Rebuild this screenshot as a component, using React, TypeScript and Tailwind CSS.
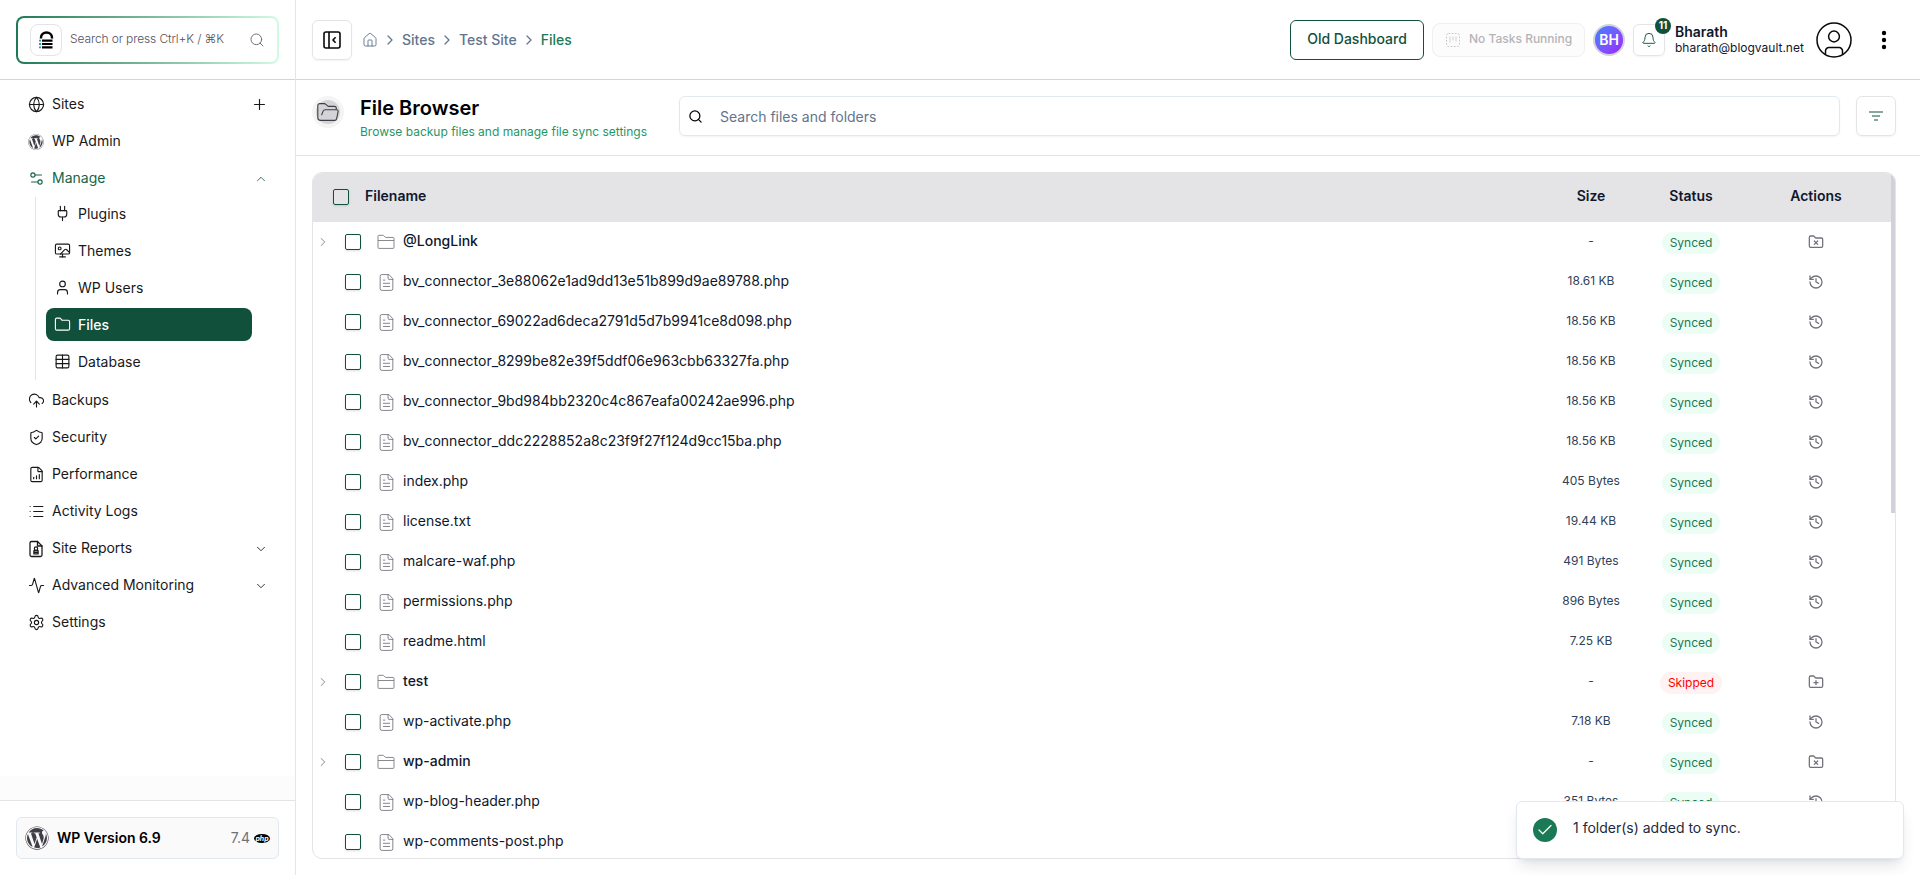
import type { ReactNode } from 'react';
import {
  Activity,
  Bell,
  Check,
  ChevronDown,
  ChevronRight,
  ChevronUp,
  CloudUpload,
  FileChartColumnIncreasing,
  FileText,
  Folder,
  FolderPlus,
  FolderX,
  Globe,
  History,
  House,
  List,
  Plug,
  Plus,
  Search,
  Settings,
  Settings2,
  ShieldCheck,
  Table,
  User,
  Wallpaper,
} from 'lucide-react';
import { FaWordpress } from 'react-icons/fa';

type FileRow = {
  name: string;
  size?: string;
  folder?: boolean;
  skipped?: boolean;
};

const files: FileRow[] = [
  { name: '@LongLink', folder: true },
  { name: 'bv_connector_3e88062e1ad9dd13e51b899d9ae89788.php', size: '18.61 KB' },
  { name: 'bv_connector_69022ad6deca2791d5d7b9941ce8d098.php', size: '18.56 KB' },
  { name: 'bv_connector_8299be82e39f5ddf06e963cbb63327fa.php', size: '18.56 KB' },
  { name: 'bv_connector_9bd984bb2320c4c867eafa00242ae996.php', size: '18.56 KB' },
  { name: 'bv_connector_ddc2228852a8c23f9f27f124d9cc15ba.php', size: '18.56 KB' },
  { name: 'index.php', size: '405 Bytes' },
  { name: 'license.txt', size: '19.44 KB' },
  { name: 'malcare-waf.php', size: '491 Bytes' },
  { name: 'permissions.php', size: '896 Bytes' },
  { name: 'readme.html', size: '7.25 KB' },
  { name: 'test', folder: true, skipped: true },
  { name: 'wp-activate.php', size: '7.18 KB' },
  { name: 'wp-admin', folder: true },
  { name: 'wp-blog-header.php', size: '351 Bytes' },
  { name: 'wp-comments-post.php', size: '2.27 KB' },
];

function LockLogo() {
  return (
    <svg width="16" height="18" viewBox="0 0 16 18" fill="none">
      <path d="M3 7.5V6.5a5.5 5 0 0 1 11 0v1" stroke="#000" strokeWidth="2.4" />
      <path d="M4 9.7h10.5M4 13h10.5M4 16.3h10.5" stroke="#000" strokeWidth="2.2" />
      <path d="M1 9.7h2M1 13h2M1 16.3h2" stroke="#2aa198" strokeWidth="1.8" />
    </svg>
  );
}

function PanelIcon() {
  return (
    <svg width="18" height="18" viewBox="0 0 18 18" fill="none" stroke="#09090b" strokeWidth="1.6">
      <rect x="1" y="1" width="16" height="16" rx="2" />
      <path d="M6 1v16M12.6 6.2 10 9l2.6 2.8" />
    </svg>
  );
}

function ReportIcon() {
  return (
    <svg width="18" height="18" viewBox="0 0 24 24" fill="none" stroke="currentColor" strokeWidth="1.7" strokeLinecap="round" strokeLinejoin="round">
      <path d="M6 22a2 2 0 0 1-2-2V4a2 2 0 0 1 2-2h8l6 6v12a2 2 0 0 1-2 2z" />
      <path d="M14 2v6h6" />
      <circle cx="12" cy="11.5" r="2.2" />
      <path d="M9.2 18.5v-4.3h5.6v4.3zM9.2 16.5h5.6" />
    </svg>
  );
}

function FolderRowIcon() {
  return (
    <svg width="20" height="20" viewBox="0 0 24 24" fill="none" stroke="#71717a" strokeWidth="1" strokeLinejoin="round">
      <path d="M2.4 18.5V5.2A1.2 1.2 0 0 1 3.6 4h4.6c.5 0 .9.2 1.2.5l1.6 1.6c.2.3.6.4 1 .4h8.4a1.2 1.2 0 0 1 1.2 1.2v10.8a1.2 1.2 0 0 1-1.2 1.2H3.6a1.2 1.2 0 0 1-1.2-1.2Z" />
      <path d="M2.4 10.2h19.2" />
    </svg>
  );
}

function FolderOpenIcon() {
  return (
    <svg width="22" height="20" viewBox="0 0 22 20" fill="none" stroke="#3f3f46" strokeWidth="1.1" strokeLinejoin="round" strokeLinecap="round">
      <path d="M19.3 7.2V6.4a2 2 0 0 0-2-2h-6.2L8.6 2.2A2 2 0 0 0 7.3 1.6H2.8a2 2 0 0 0-2 2v12.2a2.6 2.6 0 0 0 2.6 2.6h14.2a2 2 0 0 0 2-1.6l1.5-7.2a1.6 1.6 0 0 0-1.6-1.9H8.4a2.6 2.6 0 0 0-2.4 1.7l-1.3 3.3" />
    </svg>
  );
}

function UserCircle() {
  return (
    <svg width="36" height="36" viewBox="0 0 36 36" fill="none" stroke="#09090b" strokeWidth="1.5">
      <circle cx="18" cy="18" r="17" />
      <circle cx="18" cy="14.5" r="5.4" />
      <path d="M9.5 32.5V29a3.4 3.4 0 0 1 3.4-3.4h10.2a3.4 3.4 0 0 1 3.4 3.4v3.5" />
    </svg>
  );
}

function NavItem({ icon, label, end, active }: { icon: ReactNode; label: string; end?: ReactNode; active?: boolean }) {
  return (
    <div className={`flex h-[37px] items-center pr-[27px] pl-[27px] ${active ? 'text-[#166548]' : 'text-zinc-900'}`}>
      <span className="flex w-[18px] justify-center">{icon}</span>
      <span className="ml-[7px] flex-1 pb-px text-sm">{label}</span>
      {end}
    </div>
  );
}

function SubItem({ icon, label, active }: { icon: ReactNode; label: string; active?: boolean }) {
  return (
    <div
      className={`flex h-[33px] w-[206px] items-center rounded-lg pl-[7px] text-sm ${
        active ? 'bg-[#11503b] font-medium text-white' : 'text-zinc-900'
      }`}
    >
      <span className="flex w-[18px] justify-center">{icon}</span>
      <span className="ml-[7px]">{label}</span>
    </div>
  );
}

function Sidebar() {
  const nav = { size: 17, strokeWidth: 1.6 };
  const sub = { size: 17, strokeWidth: 1.6 };
  const chevron = { size: 14, strokeWidth: 1.5 };

  return (
    <aside className="flex w-[296px] shrink-0 flex-col border-r border-[#e4e4ec]">
      <div className="h-20 border-b border-[#d4d4d8] px-4 pt-4">
        <div className="h-12 w-[263px] rounded-lg bg-linear-to-r from-[#1b7a56] to-[#d1fae5] p-0.5">
          <div className="flex h-full items-center rounded-md bg-white pr-3 pl-3">
            <div className="flex h-8 w-8 items-center justify-center rounded-lg border border-zinc-200">
              <LockLogo />
            </div>
            <span className="ml-2 flex-1 pb-0.5 text-xs font-light tracking-[-0.01em] whitespace-nowrap text-zinc-600">
              Search or press Ctrl+K / ⌘K
            </span>
            <Search size={16} strokeWidth={1.5} className="text-zinc-500" />
          </div>
        </div>
      </div>

      <nav className="flex-1 pt-1.5">
        <NavItem icon={<Globe {...nav} />} label="Sites" end={<Plus size={17} strokeWidth={1.6} />} />
        <NavItem icon={<FaWordpress size={16} className="text-zinc-700" />} label="WP Admin" />
        <NavItem icon={<Settings2 {...nav} />} label="Manage" active end={<ChevronUp {...chevron} />} />
        <div className="ml-[35px] flex flex-col gap-1 border-l border-zinc-200 pb-0.5 pl-2.5">
          <SubItem icon={<Plug {...sub} />} label="Plugins" />
          <SubItem icon={<Wallpaper {...sub} />} label="Themes" />
          <SubItem icon={<User {...sub} />} label="WP Users" />
          <SubItem icon={<Folder {...sub} />} label="Files" active />
          <SubItem icon={<Table {...sub} />} label="Database" />
        </div>
        <div className="pt-0.5">
          <NavItem icon={<CloudUpload {...nav} />} label="Backups" />
          <NavItem icon={<ShieldCheck {...nav} />} label="Security" />
          <NavItem icon={<FileChartColumnIncreasing {...nav} />} label="Performance" />
          <NavItem icon={<List {...nav} />} label="Activity Logs" />
          <NavItem icon={<ReportIcon />} label="Site Reports" end={<ChevronDown {...chevron} />} />
          <NavItem icon={<Activity {...nav} />} label="Advanced Monitoring" end={<ChevronDown {...chevron} />} />
          <NavItem icon={<Settings {...nav} />} label="Settings" />
        </div>
      </nav>

      <div className="h-6 bg-[#fcfcfc]" />
      <div className="border-t border-zinc-200 px-4 py-4">
        <div className="flex h-[42px] w-[263px] items-center rounded-md border border-slate-200 bg-[#fafafa] px-2">
          <FaWordpress size={24} className="text-zinc-700" />
          <span className="ml-2 flex-1 text-sm font-semibold text-black">WP Version 6.9</span>
          <span className="mr-1 text-sm text-zinc-500">7.4</span>
          <span className="flex h-[9px] w-4 items-center justify-center rounded-[50%] bg-black text-[7px] leading-none font-bold text-white italic">
            php
          </span>
        </div>
      </div>
    </aside>
  );
}

function Topbar() {
  return (
    <header className="flex h-20 shrink-0 items-center border-b border-[#d4d4d8] pl-4">
      <div className="flex h-10 w-10 items-center justify-center rounded-md border border-zinc-200 shadow-xs">
        <PanelIcon />
      </div>
      <div className="ml-2.5 flex items-center text-sm font-medium text-slate-500">
        <House size={16} strokeWidth={1.4} />
        <ChevronRight size={16} strokeWidth={1.8} className="mx-1" />
        <span>Sites</span>
        <ChevronRight size={16} strokeWidth={1.8} className="mx-1" />
        <span>Test Site</span>
        <ChevronRight size={16} strokeWidth={1.8} className="mx-1" />
        <span className="text-[#1b7a56]">Files</span>
      </div>

      <div className="ml-auto flex items-center">
        <div className="flex h-10 w-[134px] items-center justify-center rounded-md border border-[#11503b] pb-0.5 text-sm font-medium text-[#11503b]">
          Old Dashboard
        </div>
        <div className="ml-2 flex h-[34px] w-[153px] items-center rounded-lg border border-[#f0f0f1] bg-[#fcfcfc] pl-3 text-[#b4b4b8]">
          <svg width="16" height="16" viewBox="0 0 16 16" fill="none" stroke="currentColor">
            <rect x="1.5" y="1.5" width="13" height="13" rx="2" strokeDasharray="1.6 1.6" opacity="0.8" />
            <path d="M5 4.5v6M8 4.5v4M11 4.5v5" opacity="0.6" />
          </svg>
          <span className="ml-2 pb-0.5 text-xs font-medium">No Tasks Running</span>
        </div>
        <div className="ml-2 flex h-8 w-8 items-center justify-center rounded-full border-2 border-zinc-300 bg-linear-to-br from-blue-500 to-purple-600 text-sm font-semibold text-white">
          BH
        </div>
        <div className="relative ml-2 flex h-8 w-8 items-center justify-center rounded-md border border-zinc-200 shadow-xs">
          <Bell size={16} strokeWidth={1.4} className="text-[#11503b]" />
          <span className="absolute -top-[7px] -right-[7px] flex h-4 w-4 items-center justify-center rounded-full bg-[#11503b] text-[10px] font-bold text-white">
            11
          </span>
        </div>
        <div className="ml-2.5 w-[130px] text-slate-900">
          <p className="text-sm leading-4 font-semibold">Bharath</p>
          <p className="text-xs leading-4">bharath@blogvault.net</p>
        </div>
        <div className="ml-[11px]">
          <UserCircle />
        </div>
        <svg width="6" height="20" viewBox="0 0 6 20" className="mr-[33px] ml-[29px]">
          <circle cx="3" cy="3" r="2.2" />
          <circle cx="3" cy="10" r="2.2" />
          <circle cx="3" cy="17" r="2.2" />
        </svg>
      </div>
    </header>
  );
}

function PageHeader() {
  return (
    <div className="flex h-[76px] shrink-0 items-start border-b border-zinc-200 pt-4 pr-6 pl-4">
      <div className="flex h-8 w-8 items-center justify-center rounded-full bg-zinc-100">
        <div className="flex h-6 w-6 items-center justify-center rounded-full bg-[#d4d4d8]">
          <FolderOpenIcon />
        </div>
      </div>
      <div className="ml-4 w-[303px]">
        <h1 className="text-xl leading-6 font-semibold text-black">File Browser</h1>
        <p className="mt-1 text-xs leading-4 text-[#1f9668]">Browse backup files and manage file sync settings</p>
      </div>
      <div className="ml-4 flex h-10 flex-1 items-center rounded-md border border-slate-200 pl-2 shadow-xs">
        <Search size={15} strokeWidth={2} className="text-black" />
        <span className="ml-[17px] pt-0.5 text-sm text-slate-500">Search files and folders</span>
      </div>
      <div className="ml-4 flex h-10 w-10 items-center justify-center rounded-md border border-zinc-200 shadow-xs">
        <svg width="14" height="12" viewBox="0 0 14 12" fill="#88a89d">
          <rect x="0" y="1" width="14" height="2" />
          <rect x="3" y="5" width="8" height="2" />
          <rect x="5" y="9" width="4" height="2" />
        </svg>
      </div>
    </div>
  );
}

function Checkbox() {
  return <span className="h-4 w-4 shrink-0 rounded-xs border border-[#11503b] shadow-sm" />;
}

function FileTableRow({ file }: { file: FileRow }) {
  const ActionIcon = !file.folder ? History : file.skipped ? FolderPlus : FolderX;

  return (
    <div className="flex h-10 shrink-0 items-center">
      <span className="flex w-8 pl-[3px]">
        {file.folder && <ChevronRight size={14} strokeWidth={1.8} className="text-zinc-400" />}
      </span>
      <Checkbox />
      <span className="ml-[15px] flex w-5 justify-center">
        {file.folder ? <FolderRowIcon /> : <FileText size={19} strokeWidth={1.1} className="text-zinc-500" />}
      </span>
      <span className={`ml-[7px] flex-1 pb-0.5 text-sm text-slate-900 ${file.folder ? 'font-medium' : ''}`}>
        {file.name}
      </span>
      <span className="w-[100px] pb-0.5 text-center text-xs text-slate-700">{file.size ?? '-'}</span>
      <span className="flex w-[100px] justify-center pt-0.5">
        <span
          className={`rounded-full px-2 py-[3px] text-xs leading-4 ${
            file.skipped ? 'bg-red-50 text-[#ff0000]' : 'bg-[#ecfdf5] text-[#1b7a56]'
          }`}
        >
          {file.skipped ? 'Skipped' : 'Synced'}
        </span>
      </span>
      <span className="flex w-[150px] justify-center text-zinc-500">
        <ActionIcon size={16} strokeWidth={1.9} />
      </span>
      <span className="w-1" />
    </div>
  );
}

function FileTable() {
  return (
    <div className="relative mt-4 mr-6 ml-4 flex h-[687px] flex-col overflow-hidden rounded-[10px] border border-zinc-200">
      <div className="flex h-[49px] shrink-0 items-center bg-[#e4e4e7] pb-px pl-5 text-sm font-semibold text-slate-900">
        <Checkbox />
        <span className="ml-4 flex-1 pb-0.5">Filename</span>
        <span className="w-[100px] pb-0.5 text-center">Size</span>
        <span className="w-[100px] pb-0.5 text-center">Status</span>
        <span className="w-[150px] pb-0.5 text-center">Actions</span>
        <span className="w-1" />
      </div>
      {files.map((file) => (
        <FileTableRow key={file.name} file={file} />
      ))}
      {/* Scroll thumb */}
      <div className="absolute top-0 -right-px h-[340px] w-[5px] bg-[#d1d1da]" />
    </div>
  );
}

function Toast() {
  return (
    <div className="absolute right-4 bottom-4 flex h-[58px] w-[388px] items-center rounded-md border border-slate-200 bg-white pl-4 shadow-lg">
      <span className="flex h-6 w-6 items-center justify-center rounded-full bg-[#1b7a56]">
        <Check size={18} strokeWidth={1.6} className="text-white" />
      </span>
      <span className="ml-4 pb-1 text-sm text-slate-800">1 folder(s) added to sync.</span>
    </div>
  );
}

export default function App() {
  return (
    <div className="relative flex h-[875px] w-[1920px] overflow-hidden bg-white font-['Inter',sans-serif] antialiased">
      <Sidebar />
      <main className="flex flex-1 flex-col">
        <Topbar />
        <PageHeader />
        <FileTable />
      </main>
      <Toast />
    </div>
  );
}
